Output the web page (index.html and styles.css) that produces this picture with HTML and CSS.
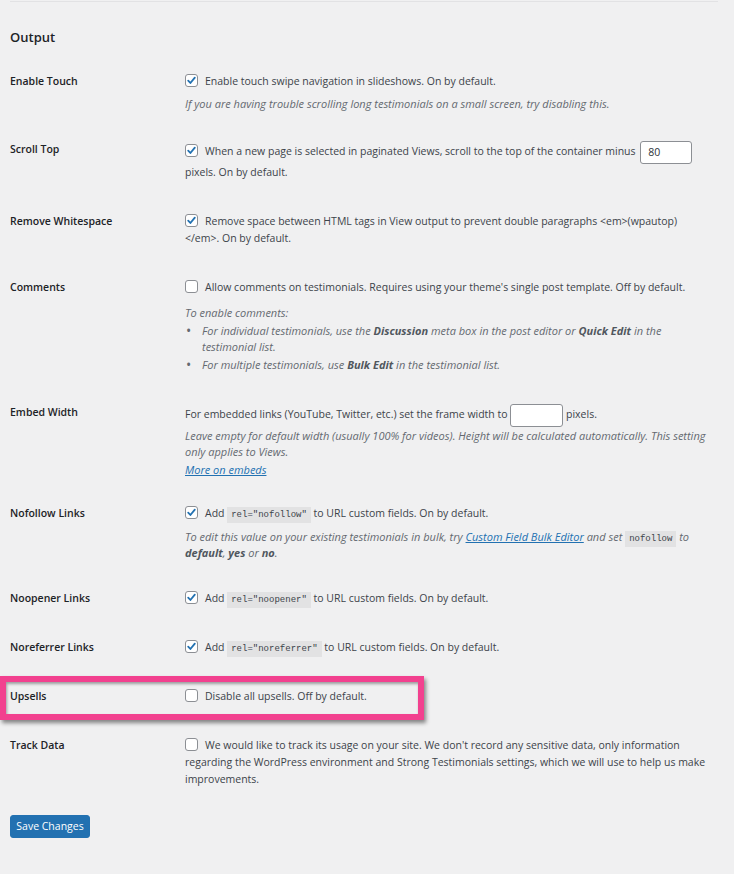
FILE: index.html
```html
<!DOCTYPE html>
<html lang="en">
<head>
<meta charset="utf-8">
<title>Output settings</title>
<link rel="stylesheet" href="styles.css">
</head>
<body>
<div class="page">
  <div class="topline"></div>
  <h2 class="section-title">Output</h2>

  <div class="row">
    <div class="label">Enable Touch</div>
    <div class="field">
      <div class="line check-line"><span class="cb on"><svg viewBox="0 0 13 13" width="13" height="13"><path d="M3.2 6.6 L5.4 9 L9.8 3.6" fill="none" stroke="#2271b1" stroke-width="1.8" stroke-linecap="round" stroke-linejoin="round"/></svg></span>Enable touch swipe navigation in slideshows. On by default.</div>
      <p class="desc desc-last">If you are having trouble scrolling long testimonials on a small screen, try disabling this.</p>
    </div>
  </div>

  <div class="row">
    <div class="label">Scroll Top</div>
    <div class="field">
      <div class="line check-line"><span class="cb on"><svg viewBox="0 0 13 13" width="13" height="13"><path d="M3.2 6.6 L5.4 9 L9.8 3.6" fill="none" stroke="#2271b1" stroke-width="1.8" stroke-linecap="round" stroke-linejoin="round"/></svg></span>When a new page is selected in paginated Views, scroll to the top of the container minus <span class="input w52">80</span> pixels. On by default.</div>
    </div>
  </div>

  <div class="row">
    <div class="label">Remove Whitespace</div>
    <div class="field">
      <div class="line check-line"><span class="cb on"><svg viewBox="0 0 13 13" width="13" height="13"><path d="M3.2 6.6 L5.4 9 L9.8 3.6" fill="none" stroke="#2271b1" stroke-width="1.8" stroke-linecap="round" stroke-linejoin="round"/></svg></span>Remove space between HTML tags in View output to prevent double paragraphs &lt;em&gt;(wpautop)&lt;/em&gt;. On by default.</div>
    </div>
  </div>

  <div class="row">
    <div class="label">Comments</div>
    <div class="field">
      <div class="line check-line"><span class="cb"></span>Allow comments on testimonials. Requires using your theme's single post template. Off by default.</div>
      <p class="desc desc-intro">To enable comments:</p>
      <ul class="desc-list">
        <li>For individual testimonials, use the <b>Discussion</b> meta box in the post editor or <b>Quick Edit</b> in the testimonial list.</li>
        <li>For multiple testimonials, use <b>Bulk Edit</b> in the testimonial list.</li>
      </ul>
    </div>
  </div>

  <div class="row">
    <div class="label">Embed Width</div>
    <div class="field">
      <div class="line">For embedded links (YouTube, Twitter, etc.) set the frame width to <span class="input w53"></span> pixels.</div>
      <p class="desc desc-embed">Leave empty for default width (usually 100% for videos). Height will be calculated automatically. This setting only applies to Views.</p>
      <p class="desc link-p"><a href="#">More on embeds</a></p>
    </div>
  </div>

  <div class="row">
    <div class="label">Nofollow Links</div>
    <div class="field">
      <div class="line check-line"><span class="cb on"><svg viewBox="0 0 13 13" width="13" height="13"><path d="M3.2 6.6 L5.4 9 L9.8 3.6" fill="none" stroke="#2271b1" stroke-width="1.8" stroke-linecap="round" stroke-linejoin="round"/></svg></span>Add <code>rel="nofollow"</code> to URL custom fields. On by default.</div>
      <p class="desc desc-wide desc-last">To edit this value on your existing testimonials in bulk, try <a href="#">Custom Field Bulk Editor</a> and set <code>nofollow</code> to <b>default</b>, <b>yes</b> or <b>no</b>.</p>
    </div>
  </div>

  <div class="row">
    <div class="label">Noopener Links</div>
    <div class="field">
      <div class="line check-line"><span class="cb on"><svg viewBox="0 0 13 13" width="13" height="13"><path d="M3.2 6.6 L5.4 9 L9.8 3.6" fill="none" stroke="#2271b1" stroke-width="1.8" stroke-linecap="round" stroke-linejoin="round"/></svg></span>Add <code>rel="noopener"</code> to URL custom fields. On by default.</div>
    </div>
  </div>

  <div class="row">
    <div class="label">Noreferrer Links</div>
    <div class="field">
      <div class="line check-line"><span class="cb on"><svg viewBox="0 0 13 13" width="13" height="13"><path d="M3.2 6.6 L5.4 9 L9.8 3.6" fill="none" stroke="#2271b1" stroke-width="1.8" stroke-linecap="round" stroke-linejoin="round"/></svg></span>Add <code>rel="noreferrer"</code> to URL custom fields. On by default.</div>
    </div>
  </div>

  <div class="row">
    <div class="highlight"></div>
    <div class="label">Upsells</div>
    <div class="field">
      <div class="line check-line"><span class="cb"></span>Disable all upsells. Off by default.</div>
    </div>
  </div>

  <div class="row">
    <div class="label">Track Data</div>
    <div class="field">
      <div class="line check-line"><span class="cb"></span>We would like to track its usage on your site. We don't record any sensitive data, only information regarding the WordPress environment and Strong Testimonials settings, which we will use to help us make improvements.</div>
    </div>
  </div>

  <div class="actions">
    <button class="btn-primary" type="button">Save Changes</button>
  </div>
</div>
</body>
</html>
```

FILE: styles.css
```css
html, body {
  margin: 0;
  background: #f0f0f1;
}

body {
  font-family: "Open Sans", "Noto Sans", "DejaVu Sans", sans-serif;
  font-size: 10.5px;
  color: #3c434a;
}

.page {
  padding: 1px 23px 40px 10px;
}

.topline {
  height: 1px;
  background: #e2e2e4;
  margin-right: -7px;
}

.section-title {
  margin: 25px 0 12px;
  font-size: 13px;
  line-height: 20px;
  font-weight: 600;
  color: #1d2327;
}

.row {
  position: relative;
  display: grid;
  grid-template-columns: 175px 1fr;
  padding: 14px 0 13px;
}

.label {
  font-weight: 600;
  color: #1d2327;
  line-height: 17px;
}

.field {
  line-height: 17px;
}

.check-line {
  margin-bottom: 5px;
}

.cb {
  display: inline-block;
  box-sizing: border-box;
  width: 13px;
  height: 13px;
  margin: 0 7px 0 0;
  border: 1px solid #8c8f94;
  border-radius: 3px;
  background: #fff;
  vertical-align: -2px;
  position: relative;
}

.cb svg {
  position: absolute;
  left: -1px;
  top: -1px;
}

.input {
  display: inline-block;
  box-sizing: border-box;
  height: 23px;
  padding: 0 7px;
  border: 1px solid #8c8f94;
  border-radius: 3px;
  background: #fff;
  line-height: 21px;
  vertical-align: middle;
  color: #2c3338;
}

.w52 { width: 52px; margin-left: 2px; }
.w53 { width: 53px; }

.desc {
  margin: 6px 0 0;
  font-size: 11px;
  line-height: 16px;
  font-style: italic;
  color: #646970;
}

.desc b {
  font-weight: 700;
  color: #50575e;
}

.desc-last {
  margin-bottom: 2px;
}

.desc-wide {
  margin-top: 7px;
}

.desc-intro {
  margin-top: 9px;
}

.desc-embed {
  margin-top: 1px;
}

.link-p {
  margin-top: 2px;
}

a {
  color: #2271b1;
  text-decoration: underline;
}

.desc-list {
  list-style: none;
  margin: 2px 0 4px;
  padding: 0;
  font-size: 11px;
  line-height: 16px;
  font-style: italic;
  color: #646970;
}

.desc-list li {
  position: relative;
  padding-left: 17px;
  margin: 0 0 2px;
}

.desc-list li::before {
  content: "•";
  position: absolute;
  left: 1px;
  top: 0;
  font-size: 14px;
  font-style: normal;
  color: #646970;
}

.desc-list b {
  font-weight: 700;
  color: #50575e;
}

code {
  font-family: "Liberation Mono", "DejaVu Sans Mono", monospace;
  font-size: 9px;
  line-height: 1;
  background: #e2e2e3;
  padding: 3px 4px;
  color: #3c434a;
  font-style: normal;
}

.highlight {
  position: absolute;
  left: -10px;
  top: 2px;
  width: 424px;
  height: 44px;
  box-sizing: border-box;
  border: 6px solid #f2418f;
  box-shadow: 2px 3px 4px rgba(0, 0, 0, 0.45), inset 1px 2px 3px rgba(0, 0, 0, 0.35);
  pointer-events: none;
}

.actions {
  padding-top: 9px;
}

.btn-primary {
  height: 23px;
  width: 80px;
  padding: 0;
  border: 1px solid #2271b1;
  border-radius: 3px;
  background: #2271b1;
  color: #fff;
  font-family: inherit;
  font-size: 10.5px;
  line-height: 21px;
}
```
